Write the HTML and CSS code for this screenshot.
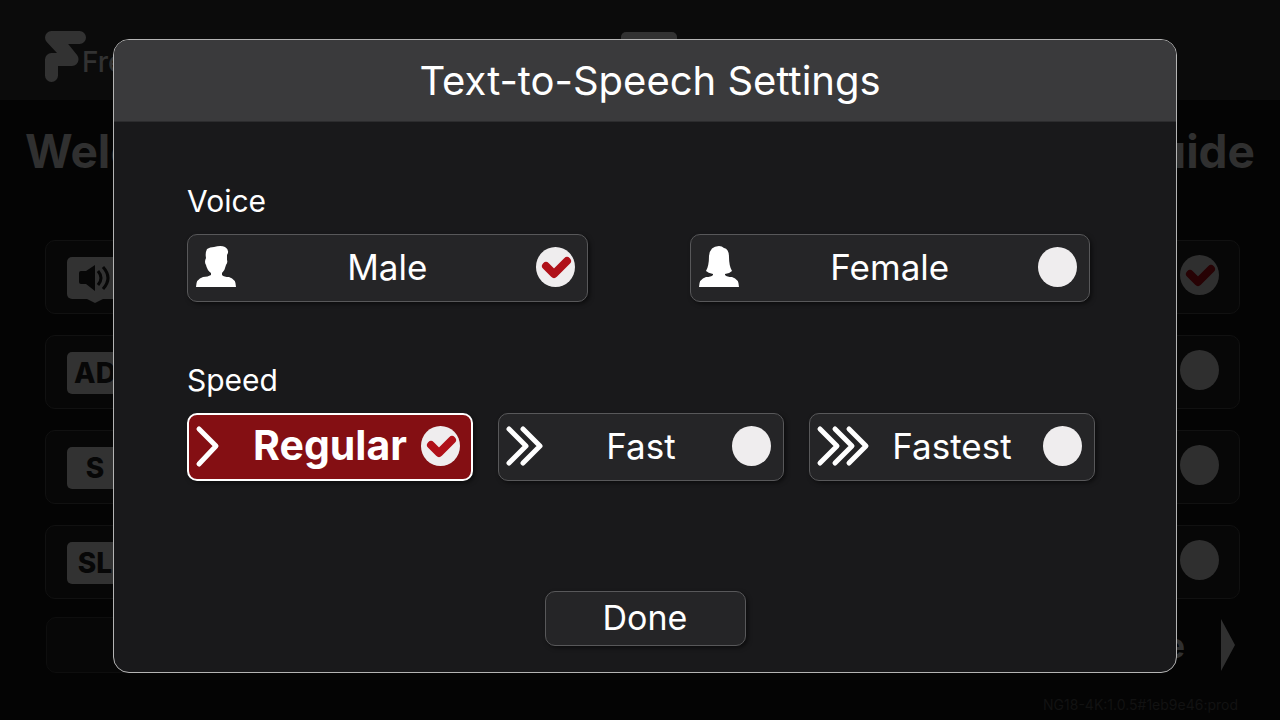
FILE: index.html
```html
<!DOCTYPE html>
<html lang="en">
<head>
    <meta charset="UTF-8">
    <meta name="viewport" content="width=device-width, initial-scale=1.0">
    <title>Text-to-Speech Settings</title>
    <link rel="stylesheet" href="styles.css">
</head>
<body>
    <div class="page" inert>
        <header class="top-bar">
            <div class="logo">
                <svg width="41" height="51" viewBox="0 0 41 51" aria-hidden="true">
                    <path d="M34.500 6.500H6.500L27 28.500H6.500V44.500M10 7L27 28" fill="none" stroke="currentColor" stroke-width="13" stroke-linecap="round" stroke-linejoin="round"/>
                </svg>
                <span class="logo-name">Freeview</span>
            </div>
            <span class="speech-badge"></span>
        </header>
        <main class="guide">
            <h1><span>Welcome to the</span> <span>TV Guide</span></h1>
            <div class="filters">
                <label class="filter">
                    <span class="badge badge-speech">
                        <svg width="34" height="26" viewBox="0 0 34 26" aria-hidden="true">
                            <path d="M1 8Q1 6 3 6H8L17 0V26L8 19H3Q1 19 1 17Z" fill="currentColor"/>
                            <path d="M20 6Q26 13 20 20M25 2Q35 13 25 24" fill="none" stroke="currentColor" stroke-width="3"/>
                        </svg>
                    </span>
                    <span class="check">
                        <input type="checkbox" aria-label="Text-to-Speech" checked>
                        <svg viewBox="0 0 39 40" aria-hidden="true"><path d="M10 19L18 27L31 14"/></svg>
                    </span>
                </label>
                <label class="filter">
                    <span class="badge">AD</span>
                    <span class="check"><input type="checkbox" aria-label="Audio Description"></span>
                </label>
                <label class="filter">
                    <span class="badge">S</span>
                    <span class="check"><input type="checkbox" aria-label="Subtitles"></span>
                </label>
                <label class="filter">
                    <span class="badge">SL</span>
                    <span class="check"><input type="checkbox" aria-label="Sign Language"></span>
                </label>
            </div>
            <div class="pager">
                <button type="button" class="settings-btn" aria-label="Settings"></button>
                <a href="#" class="next-link">
                    Continue
                    <svg width="14" height="52" viewBox="0 0 14 52" aria-hidden="true"><path d="M0 0L14 26L0 52Z" fill="currentColor"/></svg>
                </a>
            </div>
        </main>
        <footer class="version">NG18-4K:1.0.5#1eb9e46:prod</footer>
    </div>

    <form class="modal" role="dialog" aria-labelledby="modal-title">
        <h2 id="modal-title" class="modal-title">Text-to-Speech Settings</h2>
        <div class="modal-body">
            <fieldset>
                <legend>Voice</legend>
                <div class="options options-voice">
                    <label class="option">
                        <svg class="option-icon" width="40" height="41" viewBox="0 0 40 41" aria-hidden="true">
                            <path d="M10 12Q9 7 11 3Q14 1 18 1Q25 -1 29 1Q34 4 31 9L31 14Q32 16 30 19Q29 24 26 27V29Q28 31 33 31Q40 33 40 41H0Q0 33 7 31Q12 31 15 29V27Q11 24 10 19Q8 16 10 12Z" fill="currentColor"/>
                        </svg>
                        <span class="option-name">Male</span>
                        <span class="check">
                            <input type="radio" name="voice" value="male" checked>
                            <svg viewBox="0 0 39 40" aria-hidden="true"><path d="M10 19L18 27L31 14"/></svg>
                        </span>
                    </label>
                    <label class="option">
                        <svg class="option-icon" width="40" height="41" viewBox="0 0 40 41" aria-hidden="true">
                            <path d="M10 10Q11 0 20 0Q23 0 25 2Q30 3 30 11Q30 20 33 25Q30 28 26 28V29Q28 31 33 31Q40 33 40 41H0Q0 33 7 31Q12 31 14 29V28Q9 27 7 25Q10 20 10 10Z" fill="currentColor"/>
                        </svg>
                        <span class="option-name">Female</span>
                        <span class="check">
                            <input type="radio" name="voice" value="female">
                            <svg viewBox="0 0 39 40" aria-hidden="true"><path d="M10 19L18 27L31 14"/></svg>
                        </span>
                    </label>
                </div>
            </fieldset>
            <fieldset>
                <legend>Speed</legend>
                <div class="options options-speed">
                    <label class="option option-active">
                        <svg class="option-icon chevrons" width="23" height="41" viewBox="0 0 23 41" aria-hidden="true">
                            <path d="M3 3L20 20L3 38"/>
                        </svg>
                        <span class="option-name">Regular</span>
                        <span class="check">
                            <input type="radio" name="speed" value="regular" checked>
                            <svg viewBox="0 0 39 40" aria-hidden="true"><path d="M10 19L18 27L31 14"/></svg>
                        </span>
                    </label>
                    <label class="option">
                        <svg class="option-icon chevrons" width="37" height="41" viewBox="0 0 37 41" aria-hidden="true">
                            <path d="M2 4L19 21L2 38M16 4L33 21L16 38"/>
                        </svg>
                        <span class="option-name">Fast</span>
                        <span class="check">
                            <input type="radio" name="speed" value="fast">
                            <svg viewBox="0 0 39 40" aria-hidden="true"><path d="M10 19L18 27L31 14"/></svg>
                        </span>
                    </label>
                    <label class="option">
                        <svg class="option-icon chevrons" width="52" height="41" viewBox="0 0 52 41" aria-hidden="true">
                            <path d="M2 4L19 21L2 38M17 4L34 21L17 38M31 4L48 21L31 38"/>
                        </svg>
                        <span class="option-name">Fastest</span>
                        <span class="check">
                            <input type="radio" name="speed" value="fastest">
                            <svg viewBox="0 0 39 40" aria-hidden="true"><path d="M10 19L18 27L31 14"/></svg>
                        </span>
                    </label>
                </div>
            </fieldset>
            <button type="button" class="done-btn">Done</button>
        </div>
    </form>
</body>
</html>
```
FILE: styles.css
```css
* {
    margin: 0;
    padding: 0;
    box-sizing: border-box;
}
body {
    font-family: Inter, "Liberation Sans", sans-serif;
    background-color: #040404;
    color: #fff;
}
button {
    font-family: inherit;
    cursor: pointer;
}

/* Guide behind the dialog */
.page {
    min-height: 100vh;
    display: flex;
    flex-direction: column;
    color: #303030;
}
.top-bar {
    display: grid;
    grid-template-columns: 1fr auto 1fr;
    align-items: start;
    height: 100px;
    padding: 31px 27px 0 45px;
    background-color: #0b0b0b;
}
.logo {
    display: flex;
    align-items: center;
    color: #323232;
}
.logo-name {
    font-size: 28px;
    font-weight: 500;
    line-height: 62px;
    height: 51px;
    margin-left: -4px;
}
.speech-badge {
    width: 56px;
    height: 42px;
    margin-top: 1px;
    border-radius: 5px;
    background-color: #323232;
}
.guide {
    flex: 1;
    padding: 23px 40px 0 45px;
}
.guide h1 {
    display: flex;
    justify-content: space-between;
    font-size: 46px;
    line-height: 56px;
    margin: 0 -15px 61px -20px;
}
.filters {
    display: flex;
    flex-direction: column;
    gap: 21px;
}
.filter {
    display: flex;
    align-items: center;
    justify-content: space-between;
    height: 74px;
    padding: 0 20px 4px 21px;
    background-color: #070707;
    border: 1px solid #111;
    border-radius: 10px;
}
.badge {
    display: flex;
    align-items: center;
    justify-content: center;
    width: 56px;
    height: 42px;
    margin-top: 5px;
    border-radius: 5px;
    background-color: #323232;
    color: #070707;
    font-size: 28px;
    font-weight: 800;
}
.badge-speech {
    position: relative;
}
.badge-speech::after {
    content: "";
    position: absolute;
    top: 100%;
    left: 20px;
    border: 8px solid transparent;
    border-top: 4px solid #323232;
    border-bottom: 0;
}
.pager {
    display: flex;
    justify-content: space-between;
    align-items: center;
    padding: 0 5px 0 1px;
    margin-top: 18px;
}
.settings-btn {
    width: 400px;
    height: 56px;
    background-color: #070707;
    border: 1px solid #0e0e0e;
    border-radius: 10px;
}
.next-link {
    display: flex;
    align-items: center;
    gap: 36px;
    color: #303030;
    font-size: 34px;
    font-weight: 700;
    text-decoration: none;
}
.version {
    padding: 0 42px 6px;
    font-size: 14px;
    line-height: 18px;
    text-align: right;
    color: #121212;
}

/* Round tick control */
.check {
    display: grid;
    width: 39px;
    height: 40px;
}
.check input, .check svg {
    grid-area: 1 / 1;
    width: 100%;
    height: 100%;
}
.check input {
    appearance: none;
    border-radius: 50%;
    background-color: #efedee;
}
.check svg {
    display: none;
    fill: none;
    stroke: #b01119;
    stroke-width: 8;
    stroke-linecap: round;
    stroke-linejoin: round;
    pointer-events: none;
}
.check input:checked + svg {
    display: block;
}
.page .check input {
    background-color: #2f2f2f;
}
.page .check svg {
    stroke: #270204;
}

/* Dialog */
.modal {
    position: absolute;
    inset: 39px 103px 47px 113px;
    display: flex;
    flex-direction: column;
    background-color: #19191b;
    border: 1px solid #b4b4b4;
    border-radius: 16px;
    overflow: hidden;
}
.modal-title {
    padding: 1px 0 0 10px;
    background-color: #3a3a3c;
    border-bottom: 1px solid #2c2c2e;
    font-size: 40px;
    font-weight: 400;
    line-height: 80px;
    text-align: center;
}
.modal-body {
    flex: 1;
    display: flex;
    flex-direction: column;
    gap: 61px;
    padding: 62px 81px 26px 73px;
}
.modal fieldset {
    border: 0;
}
.modal legend {
    font-size: 30px;
    line-height: 34px;
    margin-bottom: 16px;
}
.options {
    display: grid;
}
.options-voice {
    grid-template-columns: 1fr 1fr;
    gap: 102px;
    margin-right: 5px;
}
.options-speed {
    grid-template-columns: 1fr 1fr 1fr;
    gap: 25px;
}
.option {
    display: grid;
    grid-template-columns: 1fr auto 1fr;
    align-items: center;
    height: 68px;
    padding: 0 8px 3px;
    background-color: #252527;
    border: 1px solid #58585a;
    border-radius: 10px;
    box-shadow: 2px 2px 4px rgba(0, 0, 0, 0.5);
    cursor: pointer;
}
.option-name {
    padding-top: 1px;
    font-size: 35px;
    line-height: 44px;
}
.option .check {
    justify-self: end;
    margin-right: 4px;
}
.option-active {
    background-color: #840f13;
    border: 2px solid #fff;
    padding: 0 7px 2px;
}
.option-active .option-name {
    font-size: 41px;
    font-weight: 700;
    padding: 0 0 2px;
}
.chevrons {
    fill: none;
    stroke: #fff;
    stroke-width: 5;
    stroke-linecap: round;
    stroke-linejoin: round;
    overflow: visible;
}
.done-btn {
    align-self: center;
    width: 201px;
    height: 55px;
    padding-bottom: 3px;
    margin: auto 0 0 8px;
    background-color: #252527;
    border: 1px solid #58585a;
    border-radius: 10px;
    box-shadow: 2px 2px 4px rgba(0, 0, 0, 0.5);
    color: #fff;
    font-size: 34px;
}
```
